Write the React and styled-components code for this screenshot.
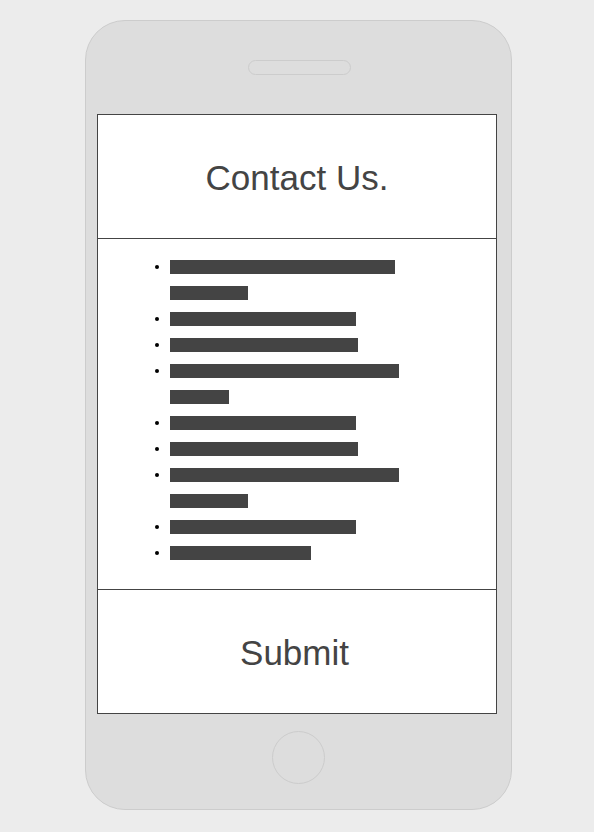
import React from "react";
import styled, { createGlobalStyle } from "styled-components";

const Global = createGlobalStyle`
  html, body { margin: 0; padding: 0; background: #ececec; }
  body { font-family: "Liberation Sans", Arial, sans-serif; }
`;

const Phone = styled.div`
  box-sizing: border-box;
  width: 427px;
  height: 790px;
  margin: 20px 0 0 85px;
  background: #dddddd;
  border: 1px solid #cccccc;
  border-radius: 40px;
  display: flex;
  flex-direction: column;
`;

const TopBezel = styled.div`
  height: 93px;
  display: flex;
  justify-content: center;
  padding-top: 39px;
  box-sizing: border-box;
`;

const Speaker = styled.div`
  box-sizing: border-box;
  width: 103px;
  height: 15px;
  margin-left: 2px;
  border: 1px solid #cccccc;
  border-radius: 8px;
`;

const Screen = styled.div`
  box-sizing: border-box;
  width: 400px;
  height: 600px;
  margin-left: 11px;
  background: #ffffff;
  border: 1px solid #444444;
  display: flex;
  flex-direction: column;
`;

const Title = styled.div`
  box-sizing: border-box;
  height: 124px;
  border-bottom: 1px solid #444444;
  padding-top: 2px;
  display: flex;
  align-items: center;
  justify-content: center;
  font-size: 35px;
  color: #444444;
`;

const List = styled.ul`
  flex: 1;
  margin: 0;
  padding: 15px 0 0 57px;
  list-style: none;
`;

const Item = styled.li`
  display: flex;
  align-items: flex-start;
`;

const Bullet = styled.span`
  width: 4px;
  height: 4px;
  margin-top: 11px;
  margin-right: 11px;
  border-radius: 50%;
  background: #000000;
  flex: none;
`;

const Lines = styled.div`
  display: flex;
  flex-direction: column;
`;

const Line = styled.div`
  height: 26px;
  display: flex;
  align-items: center;
`;

const Bar = styled.span`
  display: block;
  height: 14px;
  background: #444444;
`;

const Footer = styled.div`
  box-sizing: border-box;
  height: 124px;
  border-top: 1px solid #444444;
  display: flex;
  align-items: center;
  justify-content: center;
  padding-right: 5px;
  padding-top: 2px;
  font-size: 35px;
  color: #444444;
`;

const BottomBezel = styled.div`
  flex: 1;
  display: flex;
  justify-content: center;
  padding-top: 17px;
  box-sizing: border-box;
`;

const HomeButton = styled.div`
  box-sizing: border-box;
  width: 53px;
  height: 53px;
  border: 1px solid #cccccc;
  border-radius: 50%;
`;

const items = [
  [225, 78],
  [186],
  [188],
  [229, 59],
  [186],
  [188],
  [229, 78],
  [186],
  [141],
];

export default function App() {
  return (
    <>
      <Global />
      <Phone>
        <TopBezel>
          <Speaker />
        </TopBezel>
        <Screen>
          <Title>Contact Us.</Title>
          <List>
            {items.map((widths, i) => (
              <Item key={i}>
                <Bullet />
                <Lines>
                  {widths.map((w, j) => (
                    <Line key={j}>
                      <Bar style={{ width: w }} />
                    </Line>
                  ))}
                </Lines>
              </Item>
            ))}
          </List>
          <Footer>Submit</Footer>
        </Screen>
        <BottomBezel>
          <HomeButton />
        </BottomBezel>
      </Phone>
    </>
  );
}
